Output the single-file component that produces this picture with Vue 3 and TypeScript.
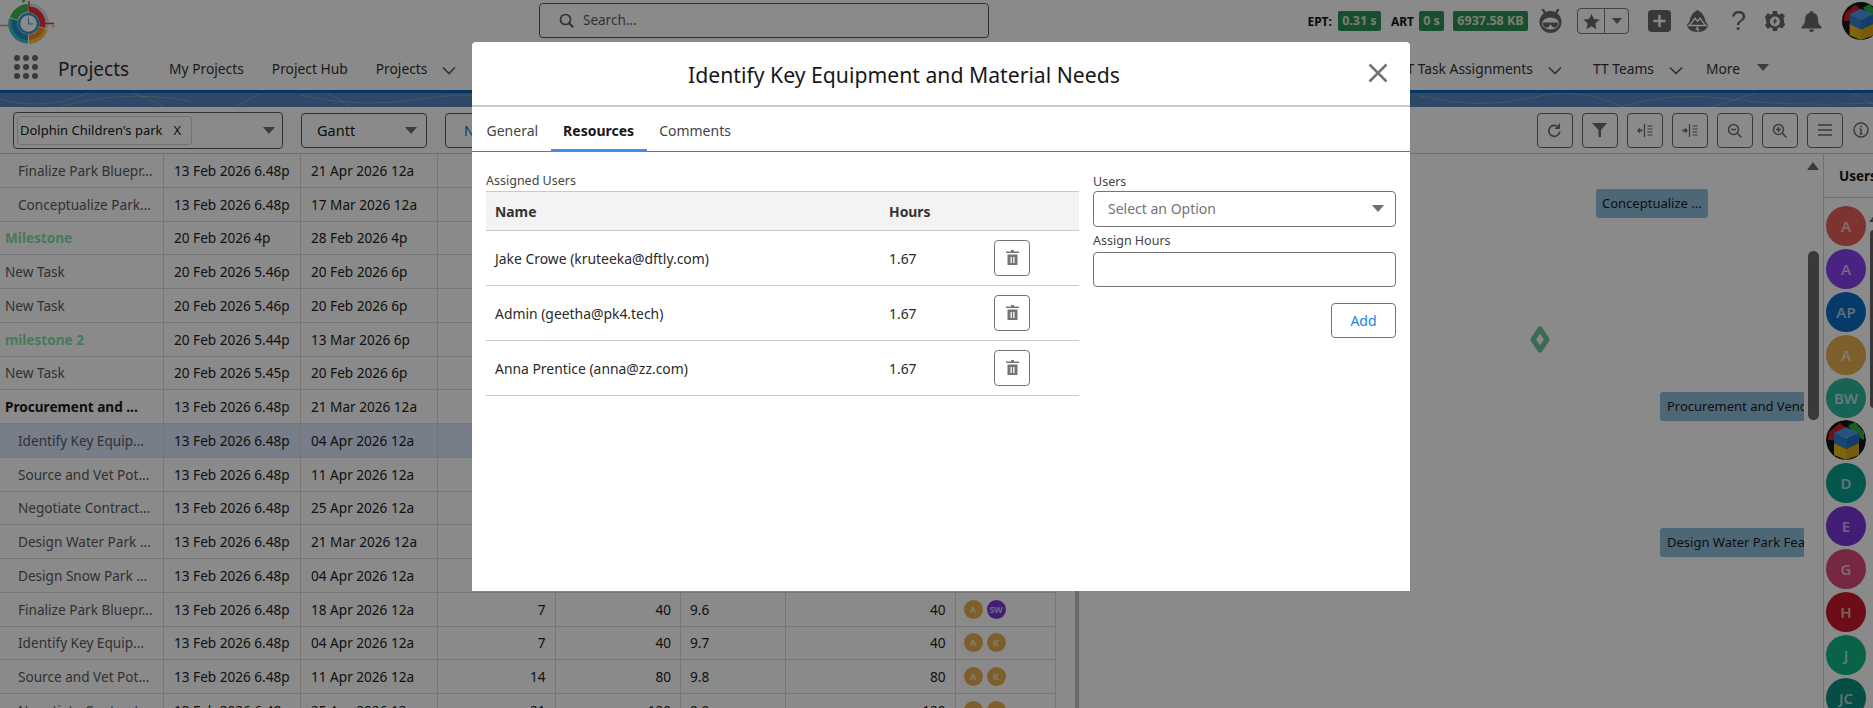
<script setup lang="ts">
interface Row {
  name: string; start: string; end: string; kind?: string;
  days?: string; hrs?: string; wbs?: string; total?: string; users?: string[];
}
const s = '13 Feb 2026 6.48p';
const rows: Row[] = [
  { name: 'Finalize Park Bluepr...', start: s, end: '21 Apr 2026 12a', kind: 'child' },
  { name: 'Conceptualize Park...', start: s, end: '17 Mar 2026 12a', kind: 'child' },
  { name: 'Milestone', start: '20 Feb 2026 4p', end: '28 Feb 2026 4p', kind: 'mile' },
  { name: 'New Task', start: '20 Feb 2026 5.46p', end: '20 Feb 2026 6p' },
  { name: 'New Task', start: '20 Feb 2026 5.46p', end: '20 Feb 2026 6p' },
  { name: 'milestone 2', start: '20 Feb 2026 5.44p', end: '13 Mar 2026 6p', kind: 'mile' },
  { name: 'New Task', start: '20 Feb 2026 5.45p', end: '20 Feb 2026 6p' },
  { name: 'Procurement and ...', start: s, end: '21 Mar 2026 12a', kind: 'parent' },
  { name: 'Identify Key Equip...', start: s, end: '04 Apr 2026 12a', kind: 'child active' },
  { name: 'Source and Vet Pot...', start: s, end: '11 Apr 2026 12a', kind: 'child' },
  { name: 'Negotiate Contract...', start: s, end: '25 Apr 2026 12a', kind: 'child' },
  { name: 'Design Water Park ...', start: s, end: '21 Mar 2026 12a', kind: 'child' },
  { name: 'Design Snow Park ...', start: s, end: '04 Apr 2026 12a', kind: 'child' },
  { name: 'Finalize Park Bluepr...', start: s, end: '18 Apr 2026 12a', kind: 'child', days: '7', hrs: '40', wbs: '9.6', total: '40', users: ['A', 'SW'] },
  { name: 'Identify Key Equip...', start: s, end: '04 Apr 2026 12a', kind: 'child', days: '7', hrs: '40', wbs: '9.7', total: '40', users: ['A', 'K'] },
  { name: 'Source and Vet Pot...', start: s, end: '11 Apr 2026 12a', kind: 'child', days: '14', hrs: '80', wbs: '9.8', total: '80', users: ['A', 'K'] },
  { name: 'Negotiate Contract...', start: s, end: '25 Apr 2026 12a', kind: 'child', days: '21', hrs: '120', wbs: '9.9', total: '120', users: ['A', 'K'] },
];
const assigned = [
  { name: 'Jake Crowe (kruteeka@dftly.com)', hours: '1.67' },
  { name: 'Admin (geetha@pk4.tech)', hours: '1.67' },
  { name: 'Anna Prentice (anna@zz.com)', hours: '1.67' },
];
const people = [
  { t: 'A', c: 'red' }, { t: 'A', c: 'purple' }, { t: 'AP', c: 'blue' }, { t: 'A', c: 'gold' },
  { t: 'BW', c: 'seafoam' }, { t: '', c: 'img' }, { t: 'D', c: 'teal' }, { t: 'E', c: 'purple2' },
  { t: 'G', c: 'rose' }, { t: 'H', c: 'crimson' }, { t: 'J', c: 'green' }, { t: 'JC', c: 'teal2' },
];
const leftNav = ['My Projects', 'Project Hub'];

function arc(r: number, a0: number, a1: number): string {
  const cx = 28.5;
  const cy = 23.5;
  const p = (a: number) => {
    const t = ((a - 90) * Math.PI) / 180;
    return `${(cx + r * Math.cos(t)).toFixed(2)} ${(cy + r * Math.sin(t)).toFixed(2)}`;
  };
  return `M${p(a0)}A${r} ${r} 0 ${a1 - a0 > 180 ? 1 : 0} 1 ${p(a1)}`;
}
const logoArcs = [
  { d: arc(18.5, 2, 105), c: '#d8d8ee', w: 3.5 },
  { d: arc(14, 2, 105), c: '#e5322e', w: 6 },
  { d: arc(18.5, 108, 178), c: '#f4c542', w: 3.5 },
  { d: arc(14, 108, 178), c: '#ee8a2c', w: 6 },
  { d: arc(18.5, 182, 285), c: '#35c4b8', w: 3.5 },
  { d: arc(14, 182, 285), c: '#1d8fc4', w: 6 },
  { d: arc(15.5, 288, 358), c: '#3cba55', w: 8 },
];
</script>

<template>
  <div class="page">
    <svg class="defs" aria-hidden="true">
      <symbol id="cube" viewBox="0 0 40 40">
        <circle cx="20" cy="20" r="20" fill="#161616" />
        <path d="M3 12 L14 3 L20 8 L8 20 L2 20Z" fill="#d81f1f" />
        <path d="M22 6 L29 2 L38 12 L38 20 L32 17Z" fill="#2fae44" />
        <path d="M20 7 L33 13 L20 20 L8 13Z" fill="#4a9be6" />
        <path d="M8 13 L20 20 L20 29 L8 23Z" fill="#2f82d6" />
        <path d="M33 13 L20 20 L20 29 L33 23Z" fill="#2572c2" />
        <path d="M8 23 L20 29 L20 40 L8 35Z" fill="#e9bd1c" />
        <path d="M33 23 L20 29 L20 40 L33 35Z" fill="#d9a814" />
      </symbol>
      <symbol id="trash" viewBox="0 0 13 15">
        <path fill="#747474" fill-rule="evenodd" d="M5 0h3v1.500h5V3H0V1.500h5zM1.500 4.500h10V15h-10zM4.500 7v6h1.300V7zM7.200 7v6h1.300V7z" />
      </symbol>
      <symbol id="chev" viewBox="0 0 14 9">
        <path d="M1 1.500 7 7.500l6-6" fill="none" stroke="#5c5c5c" stroke-width="1.600" />
      </symbol>
    </svg>

    <header class="topbar">
      <svg class="logo" width="58" height="44" viewBox="0 0 58 44">
        <path v-for="a in logoArcs" :key="a.d" :d="a.d" fill="none" :stroke="a.c" :stroke-width="a.w" />
        <circle cx="28.500" cy="23.500" r="9.500" fill="#fff" stroke="#2e9ad0" stroke-width="2.400" />
        <path d="M28.500 17.500v6.500h4.500" fill="none" stroke="#2e9ad0" stroke-width="1" />
        <path d="M29 1v9M45 23.500h9" stroke="#d84040" stroke-width="1.500" />
        <path d="M0 25.500h11" stroke="#e88a8a" stroke-width="1.500" />
        <circle cx="53" cy="26" r="1.500" fill="#f0c040" /><circle cx="23.500" cy="1" r="1.500" fill="#3cba55" />
      </svg>
      <div class="search">
        <svg width="15" height="15" viewBox="0 0 15 15"><circle cx="6.500" cy="6.500" r="5" fill="none" stroke="#5c5c5c" stroke-width="1.700" /><path d="m10.200 10.200 4 4" stroke="#5c5c5c" stroke-width="2" /></svg>
        <span>Search...</span>
      </div>
      <div class="status">
        <b class="lbl first">EPT:</b><span class="pill p1">0.31 s</span>
        <b class="lbl second">ART</b><span class="pill p2">0 s</span>
        <span class="pill p3">6937.58 KB</span>
        <svg class="robot" width="25" height="24" viewBox="0 0 25 24">
          <path d="M4.500 0l3 5M20.500 0l-3 5" stroke="#6a6a6a" stroke-width="2.400" />
          <circle cx="12.500" cy="13" r="11" fill="#6a6a6a" />
          <ellipse cx="12.500" cy="14.500" rx="8.500" ry="6" fill="#fff" />
          <path d="M5 13.500h15v1.500q-.5 3.500-3.500 3.500-3 0-3.500-3h-1q-.5 3-3.500 3-3 0-3.500-3.500z" fill="#6a6a6a" />
        </svg>
        <div class="fav">
          <span class="fav-star"><svg width="17" height="17" viewBox="0 0 18 18"><path fill="#6a6a6a" d="m9 .8 2.500 5.600 6.100.6-4.600 4.100 1.300 6L9 14l-5.300 3.100 1.300-6L.4 7l6.100-.6z" /></svg></span>
          <span class="fav-more"><i class="tri small"></i></span>
        </div>
        <svg class="plus" width="23" height="22" viewBox="0 0 23 22"><rect width="23" height="22" rx="4" fill="#6a6a6a" /><path d="M11.500 5v12M5.500 11h12" stroke="#fff" stroke-width="2.400" /></svg>
        <svg class="trail" width="21" height="22" viewBox="0 0 21 22"><path fill="#6a6a6a" d="M10.500 0C15 2 18 7 18.500 11.500L21 15q-1 5-6 6.500L10.500 22 6 21.500Q1 20 0 15l2.500-3.500C3 7 6 2 10.500 0z" /><path d="m3 15 5-7 2.500 3.500L13 8l5 7M1 15.500h19M11 16l-1.500 3 2 .5-1 2" fill="none" stroke="#fff" stroke-width="1.300" /></svg>
        <span class="help">?</span>
        <svg class="gear" width="20" height="20" viewBox="0 0 24 24"><path fill="#6a6a6a" fill-rule="evenodd" d="M9.500 0h5l.7 3.500 2.400 1L20.500 2.500 24 6l-2 3 .9 2.200v2L24 16.500 20.500 21l-2.900-1.500-2.400 1L14.500 24h-5l-.7-3.500-2.400-1L3.500 21.500 0 17l2-3-.9-2.200v-1.500L0 7l3.500-4.500 2.900 2 2.400-1zM12 6.500a6 6 0 1 0 0 12 6 6 0 0 0 0-12z" /><path fill="#6a6a6a" d="M13 8 9 13h2.500L10.500 17 15 11.500h-2.500z" /></svg>
        <svg class="bell" width="21" height="21" viewBox="0 0 21 21"><path fill="#6a6a6a" d="M10.500 0a1.800 1.800 0 0 1 1.800 1.800c3 .8 4.700 3.200 4.700 6.700 0 3.500 1 5 3.500 7.500v1.500H.5V16C3 13.500 4 12 4 8.500c0-3.500 1.700-5.900 4.700-6.700A1.800 1.800 0 0 1 10.500 0zM8 18.500h5a2.500 2.500 0 0 1-5 0z" /></svg>
        <svg class="me" width="38" height="38"><use href="#cube" /></svg>
      </div>
    </header>

    <nav class="navbar">
      <span class="apps"><i v-for="n in 9" :key="n"></i></span>
      <span class="app-name">Projects</span>
      <span v-for="l in leftNav" :key="l" class="nav-item">{{ l }}</span>
      <span class="nav-item">Projects</span>
      <svg class="chev" width="14" height="9"><use href="#chev" /></svg>
      <span class="nav-right">
        <span class="nav-item">TT Task Assignments</span>
        <svg class="chev c1" width="14" height="9"><use href="#chev" /></svg>
        <span class="nav-item">TT Teams</span>
        <svg class="chev c2" width="14" height="9"><use href="#chev" /></svg>
        <span class="nav-item">More</span>
        <i class="tri more-tri"></i>
      </span>
    </nav>

    <div class="band">
      <svg width="1873" height="14" viewBox="0 0 1873 14" preserveAspectRatio="none">
        <g fill="none" stroke="#ffffff" stroke-opacity=".22" stroke-width="1">
          <path d="M0 6q40 12 80-3t80 9 90-6 100 8M300 2q60 14 120 4t110 6M60 14q60-18 130-6M1420 3q60 14 110 2t90 8 120-8 133 6M1620 14q50-16 110-8t143 4" />
        </g>
      </svg>
    </div>

    <div class="toolbar">
      <div class="multi">
        <span class="chip">Dolphin Children's park<em>X</em></span>
        <i class="tri"></i>
      </div>
      <div class="gantt-select"><span>Gantt</span><i class="tri"></i></div>
      <button class="new-btn">New</button>
      <div class="tools">
        <button class="tool"><svg width="15" height="15" viewBox="0 0 15 15"><path d="M12.800 8.500A5.500 5.500 0 1 1 10 3" fill="none" stroke="#6e6e6e" stroke-width="1.700" /><path fill="#6e6e6e" d="M13 0v6H7.500z" /></svg></button>
        <button class="tool"><svg width="15" height="14" viewBox="0 0 15 14"><path fill="#6e6e6e" d="M0 0h15L9 7v7H6.500V7z" /></svg></button>
        <button class="tool"><svg width="16" height="13" viewBox="0 0 16 13"><path d="M7.500 0v13" stroke="#6e6e6e" stroke-width="1.300" /><path d="M10.500 2h5M10.500 5h5M10.500 8h5M10.500 11h5" stroke="#6e6e6e" stroke-width="1.200" /><path fill="#6e6e6e" d="M0 6.500l3-3v2h2.500v2H3v2z" /></svg></button>
        <button class="tool"><svg width="16" height="13" viewBox="0 0 16 13"><path d="M7.500 0v13" stroke="#6e6e6e" stroke-width="1.300" /><path d="M10.500 2h5M10.500 5h5M10.500 8h5M10.500 11h5" stroke="#6e6e6e" stroke-width="1.200" /><path fill="#6e6e6e" d="M6 6.500l-3-3v2H.5v2H3v2z" /></svg></button>
        <button class="tool"><svg width="15" height="15" viewBox="0 0 15 15"><circle cx="6.500" cy="6.500" r="5" fill="none" stroke="#6e6e6e" stroke-width="1.500" /><path d="M4 6.500h5M10 10l4.500 4.500" stroke="#6e6e6e" stroke-width="1.500" /></svg></button>
        <button class="tool"><svg width="15" height="15" viewBox="0 0 15 15"><circle cx="6.500" cy="6.500" r="5" fill="none" stroke="#6e6e6e" stroke-width="1.500" /><path d="M4 6.500h5M6.500 4v5M10 10l4.500 4.500" stroke="#6e6e6e" stroke-width="1.500" /></svg></button>
        <button class="tool"><svg width="14" height="12" viewBox="0 0 14 12"><path d="M0 1h14M0 6h14M0 11h14" stroke="#6e6e6e" stroke-width="1.600" /></svg></button>
        <svg class="info" width="16" height="16" viewBox="0 0 16 16"><circle cx="8" cy="8" r="7" fill="none" stroke="#6e6e6e" stroke-width="1.500" /><path d="M8 7v5M8 3.800v1.800M6.500 7H8M6.500 12h3" stroke="#6e6e6e" stroke-width="1.500" /></svg>
      </div>
    </div>

    <main class="work">
      <section class="grid">
        <div v-for="(r, i) in rows" :key="i" class="row" :class="{ hl: r.kind === 'child active' }">
          <div class="cell name" :class="r.kind">{{ r.name }}</div>
          <div class="cell date">{{ r.start }}</div>
          <div class="cell date">{{ r.end }}</div>
          <div class="cell num">{{ r.days }}</div>
          <div class="cell num">{{ r.hrs }}</div>
          <div class="cell wbs">{{ r.wbs }}</div>
          <div class="cell num">{{ r.total }}</div>
          <div class="cell who">
            <span v-for="u in r.users" :key="u" class="mini" :class="u === 'SW' ? 'violet' : 'amber'">{{ u }}</span>
          </div>
        </div>
      </section>
      <div class="split"><i></i></div>
      <section class="gantt">
        <div class="bar b1">Conceptualize ...</div>
        <svg class="diamond" width="20" height="27" viewBox="0 0 20 27"><path fill="none" stroke="#6dc79a" stroke-width="5" stroke-linejoin="round" d="M10 3 17 13.500 10 24 3 13.500z" /></svg>
        <div class="bar b2">Procurement and Vend</div>
        <div class="bar b3">Design Water Park Feat</div>
        <i class="up"></i>
        <i class="thumb"></i>
      </section>
      <aside class="users">
        <div class="users-head">Users</div>
        <div class="people">
          <span v-for="(p, i) in people" :key="i" class="person" :class="p.c">
            <svg v-if="p.c === 'img'" width="40" height="40"><use href="#cube" /></svg>
            <template v-else>{{ p.t }}</template>
          </span>
        </div>
        <i class="up up2"></i>
        <i class="thumb thumb2"></i>
      </aside>
    </main>

    <div class="scrim">
      <div class="modal">
        <div class="m-head">
          <h2>Identify Key Equipment and Material Needs</h2>
          <svg class="close" width="20" height="20" viewBox="0 0 20 20"><path d="M1.500 1.500l17 17M18.500 1.500l-17 17" stroke="#747474" stroke-width="2.600" /></svg>
        </div>
        <div class="tabs">
          <span class="tab">General</span>
          <span class="tab on">Resources</span>
          <span class="tab">Comments</span>
        </div>
        <div class="m-body">
          <div class="assigned">
            <div class="cap">Assigned Users</div>
            <div class="a-row a-head"><span>Name</span><span>Hours</span><span></span></div>
            <div v-for="a in assigned" :key="a.name" class="a-row">
              <span>{{ a.name }}</span><span>{{ a.hours }}</span>
              <span><button class="del"><svg width="13" height="15"><use href="#trash" /></svg></button></span>
            </div>
          </div>
          <form class="form" @submit.prevent>
            <label>Users</label>
            <div class="select"><span>Select an Option</span><i class="tri"></i></div>
            <label class="second-label">Assign Hours</label>
            <input class="input" type="text" />
            <button class="add">Add</button>
          </form>
        </div>
      </div>
    </div>
  </div>
</template>

<style>
html, body { margin: 0; background: #fff; overflow: hidden; }
</style>

<style scoped>
.page { width: 1873px; height: 708px; position: relative; overflow: hidden; background: #fff; font-family: "Noto Sans", "Open Sans", sans-serif; font-size: 14px; color: #181818; }
.defs { display: none; }
button { font-family: inherit; background: #fff; cursor: pointer; }
i { display: block; font-style: normal; }
.tri { width: 0; height: 0; border-left: 6px solid transparent; border-right: 6px solid transparent; border-top: 7px solid #6e6e6e; }
.tri.small { border-left-width: 5px; border-right-width: 5px; border-top-width: 6px; }

.topbar { height: 44px; display: flex; align-items: center; position: relative; }
.logo { flex: none; }
.search { margin-left: 481px; width: 450px; height: 35px; box-sizing: border-box; border: 1px solid #5c5c5c; border-radius: 4px; background: #fff; display: flex; align-items: center; gap: 9px; padding-left: 19px; color: #5c5c5c; font-size: 13.500px; margin-top: -4px; }
.status { margin-left: auto; display: flex; align-items: center; margin-top: -2px; margin-right: -7px; }
.lbl { font-size: 12px; color: #111; font-weight: 700; }
.first { margin-right: 6px; }
.second { margin: 0 5px 0 10px; }
.pill { height: 20px; line-height: 20px; border-radius: 2px; background: #2a9058; color: #e9e9c8; font-size: 12.500px; font-weight: 700; padding: 0; box-sizing: border-box; text-align: center; white-space: nowrap; }
.p1 { width: 43px; } .p2 { width: 25px; } .p3 { width: 75px; margin-left: 9px; }
.robot { margin-left: 10px; }
.fav { margin-left: 14px; width: 52px; height: 26px; box-sizing: border-box; border: 1px solid #7a7a7a; border-radius: 4px; display: flex; }
.fav-star { width: 26px; display: flex; align-items: center; justify-content: center; border-right: 1px solid #7a7a7a; }
.fav-more { flex: 1; display: flex; align-items: center; justify-content: center; }
.plus { margin-left: 19px; }
.trail { margin-left: 16px; }
.help { width: 15px; margin-left: 23px; text-align: center; font-family: "Liberation Sans", sans-serif; font-size: 27px; line-height: 26px; color: #6a6a6a; }
.gear { margin-left: 19px; }
.bell { margin-left: 16px; }
.me { margin-left: 20px; }

.navbar { height: 46px; display: flex; align-items: center; position: relative; padding-left: 14px; box-sizing: border-box; padding-top: 3px; }
.apps { width: 24px; display: grid; grid-template-columns: repeat(3, 6px); gap: 3px; flex: none; margin-top: -3px; }
.apps i { width: 6px; height: 6px; border-radius: 50%; background: #6a6a6a; }
.app-name { font-size: 19px; margin-left: 20px; width: 111px; color: #333; }
.nav-item { white-space: nowrap; font-size: 13.800px; color: #333; margin-right: 28px; }
.chev { margin-left: -13px; margin-right: 21px; flex: none; margin-top: 3px; }
.chev.c1 { margin-right: 31px; }
.chev.c2 { margin-right: 23px; }
.nav-right { margin-left: auto; display: flex; align-items: center; padding-right: 104px; }
.more-tri { margin-left: -11px; margin-top: -3px; }

.band { height: 17px; border-top: 3px solid #0a64bc; background: #5585bc; box-sizing: border-box; overflow: hidden; }
.band svg { display: block; }

.toolbar { height: 47px; display: flex; align-items: center; position: relative; border-bottom: 1px solid #d0d0d0; box-sizing: border-box; padding: 0 0 0 13px; }
.multi { width: 270px; height: 37px; box-sizing: border-box; border: 1px solid #5c5c5c; border-radius: 4px; display: flex; align-items: center; justify-content: space-between; padding: 0 7px 0 3px; }
.chip { height: 29px; width: 175px; box-sizing: border-box; border: 1px solid #d3d3d3; border-radius: 3px; display: flex; align-items: center; padding-left: 2px; font-size: 13px; white-space: nowrap; }
.chip em { font-style: normal; margin-left: 11px; }
.gantt-select { margin-left: 18px; width: 126px; height: 35px; box-sizing: border-box; border: 1px solid #5c5c5c; border-radius: 4px; display: flex; align-items: center; justify-content: space-between; padding: 0 9px 0 15px; font-size: 14.500px; }
.new-btn { margin-left: 18px; width: 80px; height: 35px; box-sizing: border-box; border: 1px solid #5c5c5c; border-radius: 4px; color: #0176d3; font-size: 14px; text-align: left; padding: 0 0 0 18px; }
.tools { margin-left: auto; display: flex; align-items: center; gap: 9.500px; padding-right: 4px; }
.tool { width: 35.500px; height: 35px; box-sizing: border-box; border: 1px solid #6a6a6a; border-radius: 4px; padding: 0; display: flex; align-items: center; justify-content: center; }
.info { margin-left: 1px; }

.work { display: flex; height: 554px; position: relative; }
.grid { width: 1057px; flex: none; }
.row { height: 33.750px; display: grid; grid-template-columns: 164px 137px 137px 117.500px 125.500px 105px 169.500px 100.500px; box-sizing: border-box; border-bottom: 1px solid #dbdbdb; }
.row.hl { background: #dee7ff; }
.cell { border-right: 1px solid #dbdbdb; display: flex; align-items: center; white-space: nowrap; overflow: hidden; font-size: 13.600px; min-width: 0; }
.name { padding-left: 5px; color: #5a5a5a; }
.name.child { padding-left: 18px; }
.name.mile { color: #7fe3a8; font-weight: 700; }
.name.parent { color: #181818; font-weight: 700; }
.date { padding-left: 10px; color: #222; }
.num { justify-content: flex-end; padding-right: 9px; color: #222; }
.wbs { padding-left: 9px; color: #222; }
.who { padding-left: 8px; gap: 4px; }
.mini { width: 19px; height: 19px; border-radius: 50%; font-size: 9px; font-weight: 700; color: #ffffffb0; display: flex; align-items: center; justify-content: center; }
.amber { background: #e6b050; }
.violet { background: #7b36d8; }
.split { width: 22px; flex: none; display: flex; justify-content: flex-end; }
.split i { width: 4px; background: #c4c4c4; }
.gantt { position: relative; flex: 1; }
.bar { position: absolute; height: 29px; line-height: 28px; background: #90bfdc; border-radius: 3px; font-size: 13px; white-space: nowrap; overflow: hidden; color: #181818; box-sizing: border-box; }
.b1 { left: 517px; top: 35px; width: 112px; padding-left: 6px; }
.b2 { left: 581px; top: 238px; width: 144px; padding-left: 7px; border-radius: 3px 0 0 3px; }
.b3 { left: 581px; top: 374px; width: 144px; padding-left: 7px; border-radius: 3px 0 0 3px; }
.diamond { position: absolute; left: 451px; top: 171.500px; }
.up { position: absolute; left: 728px; top: 8px; width: 0; height: 0; border-left: 6px solid transparent; border-right: 6px solid transparent; border-bottom: 8px solid #6e6e6e; }
.thumb { position: absolute; left: 729px; top: 96.500px; width: 11px; height: 169.500px; border-radius: 6px; background: #6a6a6a; }
.users { width: 50px; flex: none; box-sizing: border-box; border-left: 1px solid #d0d0d0; position: relative; overflow: hidden; }
.users-head { height: 44px; box-sizing: border-box; border-bottom: 1px solid #d0d0d0; padding: 13px 0 0 15px; font-weight: 700; font-size: 13.500px; white-space: nowrap; }
.people { display: flex; flex-direction: column; align-items: flex-start; gap: 2.900px; padding: 8px 0 0 2px; }
.person { width: 40px; height: 40px; border-radius: 50%; flex: none; display: flex; align-items: center; justify-content: center; color: #ffffffa8; font-weight: 600; font-size: 15px; overflow: hidden; }
.person svg { display: block; }
.red { background: #e8615c; } .purple { background: #8a3ff0; } .blue { background: #0b6cc4; } .gold { background: #e6b050; }
.seafoam { background: #2fb5a0; } .teal { background: #0aa08f; } .purple2 { background: #7b36d8; }
.rose { background: #d84a75; } .crimson { background: #c8182c; } .green { background: #10b888; } .teal2 { background: #0a8f80; }
.up2 { left: 45px; top: 60px; }
.thumb2 { left: 46px; top: 76px; height: 178px; width: 8px; }

.scrim { position: absolute; inset: 0; background: rgba(0, 0, 0, .46); }
.modal { position: absolute; left: 472px; top: 42px; width: 938px; height: 549px; background: #fff; border-radius: 4px 4px 0 0; display: flex; flex-direction: column; }
.m-head { height: 65px; flex: none; box-sizing: border-box; border-bottom: 2px solid #c9c9c9; position: relative; display: flex; align-items: center; justify-content: center; padding: 2px 74px 0 0; }
.m-head h2 { margin: 0; font-weight: 400; font-size: 21.200px; color: #181818; }
.close { position: absolute; right: 22px; top: 21px; }
.tabs { height: 45px; flex: none; box-sizing: border-box; border-bottom: 1px solid #747474; display: flex; padding-left: 2px; }
.tab { padding: 0 12.500px; line-height: 47px; color: #444; font-size: 14px; height: 45px; box-sizing: border-box; }
.tab.on { font-weight: 700; color: #181818; border-bottom: 3px solid #3f8ff0; }
.m-body { display: flex; padding: 18px 14px 0; }
.assigned { width: 593px; flex: none; }
.cap { font-size: 12.500px; color: #444; height: 21px; line-height: 21px; }
.a-row { display: grid; grid-template-columns: 394px 105px 1fr; height: 55px; align-items: center; border-bottom: 1px solid #c9c9c9; box-sizing: border-box; padding-left: 9px; font-size: 13.900px; color: #2a2a2a; }
.a-row > span:not(:last-child) { padding-top: 1px; }
.a-head { height: 39.500px; background: #f3f3f3; border-top: 1px solid #c9c9c9; font-weight: 700; color: #333; }
.del { width: 36px; height: 36px; border: 1px solid #747474; border-radius: 4px; padding: 0; display: flex; align-items: center; justify-content: center; }
.form { margin-left: 14px; width: 303px; display: flex; flex-direction: column; align-items: stretch; }
.form label { font-size: 12.500px; color: #444; height: 21px; line-height: 23px; }
.form .second-label { height: 25px; line-height: 27px; }
.select { height: 35.500px; box-sizing: border-box; border: 1px solid #747474; border-radius: 4px; display: flex; align-items: center; justify-content: space-between; padding: 0 11px 0 14px; color: #747474; font-size: 14px; }
.input { height: 35.500px; box-sizing: border-box; border: 1px solid #747474; border-radius: 4px; padding: 0; }
.add { align-self: flex-end; margin-top: 15.500px; width: 65px; height: 35.500px; box-sizing: border-box; border: 1px solid #747474; border-radius: 4px; color: #1b85e0; font-size: 14px; padding: 0; }
</style>
